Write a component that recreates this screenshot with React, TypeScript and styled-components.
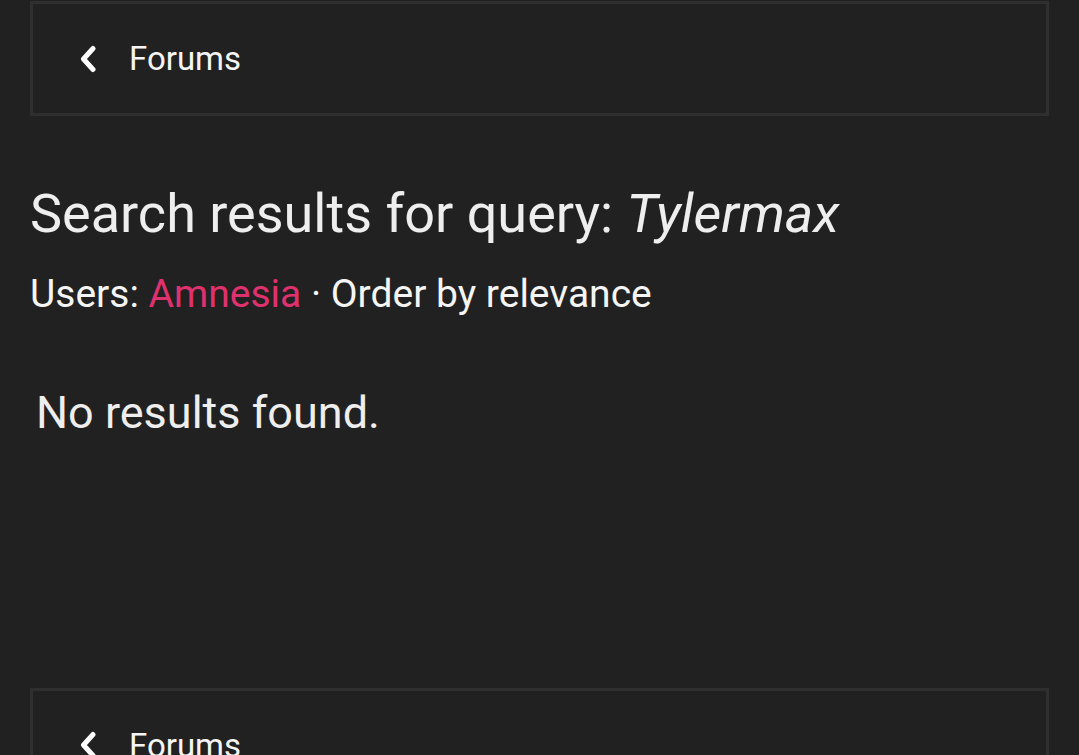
import styled, { createGlobalStyle } from 'styled-components';

const GlobalStyle = createGlobalStyle`
  html, body {
    margin: 0;
    padding: 0;
    background: #212121;
    color: #eeeeee;
    font-family: Roboto, "Noto Sans", sans-serif;
  }
`;

const Page = styled.div`
  padding: 1px 30px 0;
  display: flex;
  flex-direction: column;
`;

const NavBox = styled.div`
  height: 109px;
  border: 3px solid #2f2f2f;
  display: flex;
  align-items: center;
  padding-left: 45px;
`;

const BackLink = styled.a`
  display: flex;
  align-items: center;
  gap: 31px;
  color: #f5f5f5;
  text-decoration: none;
  font-size: 33px;
`;

const Title = styled.h1`
  margin: 71px 0 0;
  font-size: 54px;
  font-weight: 400;
  line-height: 1;
  color: #eeeeee;

  em {
    font-style: italic;
  }
`;

const Meta = styled.div`
  margin-top: 30px;
  font-size: 39px;
  line-height: 1.2;
  color: #f5f5f5;
`;

const UserLink = styled.a`
  color: #e0316f;
  text-decoration: none;
`;

const Empty = styled.p`
  margin: 68px 0 0 6px;
  font-size: 45px;
  line-height: 1.2;
  color: #eeeeee;
`;

const Spacer = styled.div`
  height: 248px;
`;

const Chevron = () => (
  <svg width="20" height="28" viewBox="0 0 20 28">
    <path d="M15 3.5 L5.5 14 L15 24.5" fill="none" stroke="#ffffff" strokeWidth="5" strokeLinecap="round" strokeLinejoin="round" />
  </svg>
);

const Nav = () => (
  <NavBox>
    <BackLink href="#">
      <Chevron />
      <span>Forums</span>
    </BackLink>
  </NavBox>
);

export default function App() {
  return (
    <>
      <GlobalStyle />
      <Page>
        <Nav />
        <Title>
          Search results for query: <em>Tylermax</em>
        </Title>
        <Meta>
          Users: <UserLink href="#">Amnesia</UserLink> · Order by relevance
        </Meta>
        <Empty>No results found.</Empty>
        <Spacer />
        <Nav />
      </Page>
    </>
  );
}
